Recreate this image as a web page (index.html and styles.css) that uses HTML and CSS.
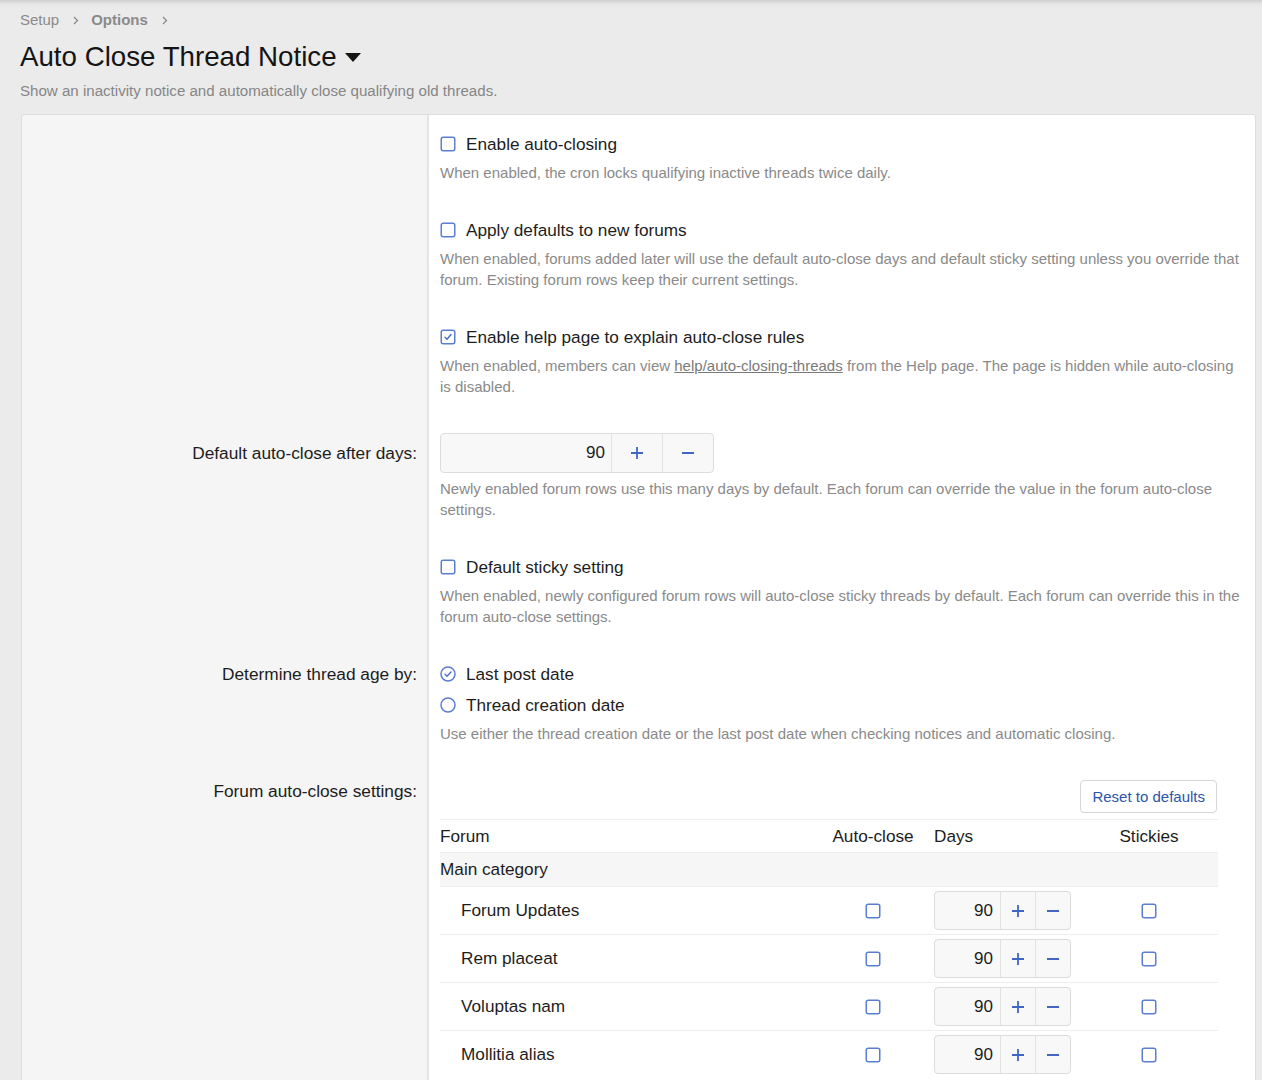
FILE: index.html
```html
<!DOCTYPE html>
<html lang="en">
<head>
<meta charset="utf-8">
<title>Auto Close Thread Notice</title>
<link rel="stylesheet" href="styles.css">
</head>
<body>
<div class="page">
  <nav class="breadcrumb">
    <span class="crumb">Setup</span>
    <svg class="chev" width="6" height="9" viewBox="0 0 6 9"><path d="M1 1l3.5 3.5L1 8" fill="none" stroke="#8a8a8a" stroke-width="1.3"/></svg>
    <span class="crumb bold">Options</span>
    <svg class="chev" width="6" height="9" viewBox="0 0 6 9"><path d="M1 1l3.5 3.5L1 8" fill="none" stroke="#8a8a8a" stroke-width="1.3"/></svg>
  </nav>
  <h1 class="title">Auto Close Thread Notice <svg class="caret" width="16" height="9" viewBox="0 0 16 9"><path d="M0 0h16L8 9z" fill="#141414"/></svg></h1>
  <p class="desc">Show an inactivity notice and automatically close qualifying old threads.</p>

  <div class="card">
    <div class="frow first">
      <div class="flabel"></div>
      <div class="fbody">
        <label class="check"><svg class="cb" width="16" height="16" viewBox="0 0 16 16"><rect x="1.25" y="1.25" width="13.5" height="13.5" rx="2" fill="#fff" stroke="#5a7ed2" stroke-width="1.5"/></svg>Enable auto-closing</label>
        <p class="hint">When enabled, the cron locks qualifying inactive threads twice daily.</p>
      </div>
    </div>
    <div class="frow">
      <div class="flabel"></div>
      <div class="fbody">
        <label class="check"><svg class="cb" width="16" height="16" viewBox="0 0 16 16"><rect x="1.25" y="1.25" width="13.5" height="13.5" rx="2" fill="#fff" stroke="#5a7ed2" stroke-width="1.5"/></svg>Apply defaults to new forums</label>
        <p class="hint">When enabled, forums added later will use the default auto-close days and default sticky setting unless you override that forum. Existing forum rows keep their current settings.</p>
      </div>
    </div>
    <div class="frow">
      <div class="flabel"></div>
      <div class="fbody">
        <label class="check"><svg class="cb" width="16" height="16" viewBox="0 0 16 16"><rect x="1.25" y="1.25" width="13.5" height="13.5" rx="2" fill="#fff" stroke="#5a7ed2" stroke-width="1.5"/><path d="M5 8.2l2 2 4-4.6" fill="none" stroke="#4a6fc8" stroke-width="1.5" stroke-linecap="round" stroke-linejoin="round"/></svg>Enable help page to explain auto-close rules</label>
        <p class="hint">When enabled, members can view <a class="link" href="#">help/auto-closing-threads</a> from the Help page. The page is hidden while auto-closing is disabled.</p>
      </div>
    </div>
    <div class="frow">
      <div class="flabel tall">Default auto-close after days:</div>
      <div class="fbody">
        <div class="spinner big">
          <span class="num">90</span>
          <span class="sbtn"><svg width="14" height="14" viewBox="0 0 14 14"><path d="M7 1v12M1 7h12" stroke="#3f66c2" stroke-width="1.8"/></svg></span>
          <span class="sbtn"><svg width="14" height="14" viewBox="0 0 14 14"><path d="M1 7h12" stroke="#3f66c2" stroke-width="1.8"/></svg></span>
        </div>
        <p class="hint after-input">Newly enabled forum rows use this many days by default. Each forum can override the value in the forum auto-close settings.</p>
      </div>
    </div>
    <div class="frow">
      <div class="flabel"></div>
      <div class="fbody">
        <label class="check"><svg class="cb" width="16" height="16" viewBox="0 0 16 16"><rect x="1.25" y="1.25" width="13.5" height="13.5" rx="2" fill="#fff" stroke="#5a7ed2" stroke-width="1.5"/></svg>Default sticky setting</label>
        <p class="hint">When enabled, newly configured forum rows will auto-close sticky threads by default. Each forum can override this in the forum auto-close settings.</p>
      </div>
    </div>
    <div class="frow">
      <div class="flabel">Determine thread age by:</div>
      <div class="fbody">
        <label class="check"><svg class="rd" width="16" height="16" viewBox="0 0 16 16"><circle cx="8" cy="8" r="7" fill="#fff" stroke="#5a7ed2" stroke-width="1.5"/><path d="M5 8.2l2 2 4-4.2" fill="none" stroke="#4a6fc8" stroke-width="1.4" stroke-linecap="round" stroke-linejoin="round"/></svg>Last post date</label>
        <label class="check second"><svg class="rd" width="16" height="16" viewBox="0 0 16 16"><circle cx="8" cy="8" r="7" fill="#fff" stroke="#5a7ed2" stroke-width="1.5"/></svg>Thread creation date</label>
        <p class="hint">Use either the thread creation date or the last post date when checking notices and automatic closing.</p>
      </div>
    </div>
    <div class="frow">
      <div class="flabel">Forum auto-close settings:</div>
      <div class="fbody">
        <div class="forum-table">
          <div class="toolbar"><button class="btn" type="button">Reset to defaults</button></div>
          <div class="trow thead">
            <div class="c-forum">Forum</div>
            <div class="c-auto">Auto-close</div>
            <div class="c-days">Days</div>
            <div class="c-sticky">Stickies</div>
          </div>
          <div class="trow tcat">
            <div class="c-forum">Main category</div>
          </div>
          <div class="trow titem">
            <div class="c-forum indent">Forum Updates</div>
            <div class="c-auto"><svg width="16" height="16" viewBox="0 0 16 16"><rect x="1.25" y="1.25" width="13.5" height="13.5" rx="2" fill="#fff" stroke="#5a7ed2" stroke-width="1.5"/></svg></div>
            <div class="c-days"><div class="spinner small"><span class="num">90</span><span class="sbtn"><svg width="14" height="14" viewBox="0 0 14 14"><path d="M7 1v12M1 7h12" stroke="#3f66c2" stroke-width="1.8"/></svg></span><span class="sbtn"><svg width="14" height="14" viewBox="0 0 14 14"><path d="M1 7h12" stroke="#3f66c2" stroke-width="1.8"/></svg></span></div></div>
            <div class="c-sticky"><svg width="16" height="16" viewBox="0 0 16 16"><rect x="1.25" y="1.25" width="13.5" height="13.5" rx="2" fill="#fff" stroke="#5a7ed2" stroke-width="1.5"/></svg></div>
          </div>
          <div class="trow titem">
            <div class="c-forum indent">Rem placeat</div>
            <div class="c-auto"><svg width="16" height="16" viewBox="0 0 16 16"><rect x="1.25" y="1.25" width="13.5" height="13.5" rx="2" fill="#fff" stroke="#5a7ed2" stroke-width="1.5"/></svg></div>
            <div class="c-days"><div class="spinner small"><span class="num">90</span><span class="sbtn"><svg width="14" height="14" viewBox="0 0 14 14"><path d="M7 1v12M1 7h12" stroke="#3f66c2" stroke-width="1.8"/></svg></span><span class="sbtn"><svg width="14" height="14" viewBox="0 0 14 14"><path d="M1 7h12" stroke="#3f66c2" stroke-width="1.8"/></svg></span></div></div>
            <div class="c-sticky"><svg width="16" height="16" viewBox="0 0 16 16"><rect x="1.25" y="1.25" width="13.5" height="13.5" rx="2" fill="#fff" stroke="#5a7ed2" stroke-width="1.5"/></svg></div>
          </div>
          <div class="trow titem">
            <div class="c-forum indent">Voluptas nam</div>
            <div class="c-auto"><svg width="16" height="16" viewBox="0 0 16 16"><rect x="1.25" y="1.25" width="13.5" height="13.5" rx="2" fill="#fff" stroke="#5a7ed2" stroke-width="1.5"/></svg></div>
            <div class="c-days"><div class="spinner small"><span class="num">90</span><span class="sbtn"><svg width="14" height="14" viewBox="0 0 14 14"><path d="M7 1v12M1 7h12" stroke="#3f66c2" stroke-width="1.8"/></svg></span><span class="sbtn"><svg width="14" height="14" viewBox="0 0 14 14"><path d="M1 7h12" stroke="#3f66c2" stroke-width="1.8"/></svg></span></div></div>
            <div class="c-sticky"><svg width="16" height="16" viewBox="0 0 16 16"><rect x="1.25" y="1.25" width="13.5" height="13.5" rx="2" fill="#fff" stroke="#5a7ed2" stroke-width="1.5"/></svg></div>
          </div>
          <div class="trow titem">
            <div class="c-forum indent">Mollitia alias</div>
            <div class="c-auto"><svg width="16" height="16" viewBox="0 0 16 16"><rect x="1.25" y="1.25" width="13.5" height="13.5" rx="2" fill="#fff" stroke="#5a7ed2" stroke-width="1.5"/></svg></div>
            <div class="c-days"><div class="spinner small"><span class="num">90</span><span class="sbtn"><svg width="14" height="14" viewBox="0 0 14 14"><path d="M7 1v12M1 7h12" stroke="#3f66c2" stroke-width="1.8"/></svg></span><span class="sbtn"><svg width="14" height="14" viewBox="0 0 14 14"><path d="M1 7h12" stroke="#3f66c2" stroke-width="1.8"/></svg></span></div></div>
            <div class="c-sticky"><svg width="16" height="16" viewBox="0 0 16 16"><rect x="1.25" y="1.25" width="13.5" height="13.5" rx="2" fill="#fff" stroke="#5a7ed2" stroke-width="1.5"/></svg></div>
          </div>
        </div>
      </div>
    </div>
  </div>
</div>
</body>
</html>
```

FILE: styles.css
```css
* { box-sizing: border-box; }
html, body { margin: 0; padding: 0; }
body {
  background: linear-gradient(#cfcfcf 0, #e6e6e6 4px, #ebebeb 8px) no-repeat, #ebebeb;
  background-size: 100% 8px, auto;
  font-family: "Liberation Sans", Arial, Helvetica, sans-serif;
  color: #1d1d1d;
  height: 1080px;
  overflow: hidden;
}
.page { padding: 0 6px 0 21px; }

.breadcrumb {
  display: flex;
  align-items: center;
  margin: 10px 0 0 -1px;
  height: 20px;
  font-size: 15px;
  line-height: 20px;
  color: #8a8a8a;
}
.crumb.bold { font-weight: bold; }
.chev { margin: 0 12px 0 14px; }

.title {
  margin: 10px 0 0 -1px;
  font-size: 27.7px;
  line-height: 34px;
  font-weight: normal;
  color: #141414;
  display: flex;
  align-items: center;
}
.caret { margin-left: 8px; margin-top: 1px; }

.desc {
  margin: 7px 0 0 -1px;
  font-size: 15.1px;
  line-height: 20px;
  color: #868686;
}

.card {
  margin-top: 13px;
  border: 1px solid #dedede;
  border-radius: 3px;
  display: flex;
  flex-direction: column;
  background: linear-gradient(90deg, #f5f5f5 0, #f5f5f5 405px, #e4e4e4 405px, #e4e4e4 407px, #fff 407px);
}
.frow {
  display: grid;
  grid-template-columns: 407px 1fr;
}
.frow.first .fbody, .frow.first .flabel { padding-top: 18px; }
.flabel {
  text-align: right;
  padding-right: 12px;
  font-size: 17.3px;
  line-height: 22px;
  color: #1d1d1d;
}
.flabel.tall { line-height: 40px; }
.fbody {
  padding: 0 12px 36px 11px;
}
.check {
  display: flex;
  align-items: center;
  height: 22px;
  font-size: 17.2px;
  color: #1d1d1d;
}
.check.second { margin-top: 9px; }
.check .cb { flex: none; margin: 0 10px 0 0; }
.check .rd { flex: none; margin: 0 10px 0 0; }
.hint {
  margin: 7px 0 0 0;
  font-size: 15px;
  line-height: 21px;
  color: #8a8a8a;
}
.hint.after-input { margin-top: 5px; }
.link { color: #7a7a7a; text-decoration: underline; }

.spinner {
  display: flex;
  border: 1px solid #dcdcdc;
  border-radius: 4px;
  background: #f8f8f8;
  overflow: hidden;
}
.spinner .num {
  flex: 1;
  text-align: right;
  color: #1d1d1d;
  font-size: 17px;
}
.spinner .sbtn {
  display: flex;
  align-items: center;
  justify-content: center;
  border-left: 1px solid #e2e2e2;
}
.spinner.big { width: 274px; height: 40px; }
.spinner.big .num { line-height: 38px; padding-right: 6px; }
.spinner.big .sbtn { width: 51px; }
.spinner.small { width: 137px; height: 39px; }
.spinner.small .num { line-height: 37px; padding-right: 7px; }
.spinner.small .sbtn { width: 35px; }

.forum-table { width: 778px; }
.toolbar { display: flex; justify-content: flex-end; margin-bottom: 6px; }
.btn {
  font-family: inherit;
  font-size: 15px;
  color: #2c55a8;
  background: #fff;
  border: 1px solid #d6d6d6;
  border-radius: 4px;
  height: 33px;
  padding: 0 11px;
  margin-right: 1px;
}
.trow {
  display: grid;
  grid-template-columns: 386px 94px 160px 138px;
  align-items: center;
  font-size: 17.2px;
  color: #1d1d1d;
  border-top: 1px solid #eeeeee;
}
.thead { height: 33px; }
.tcat { height: 34px; background: #f6f6f6; }
.titem { height: 48px; }
.c-auto, .c-sticky { display: flex; justify-content: center; }
.c-auto { padding-left: 0; }
.c-days { padding-left: 14px; }
.indent { padding-left: 21px; }
```
